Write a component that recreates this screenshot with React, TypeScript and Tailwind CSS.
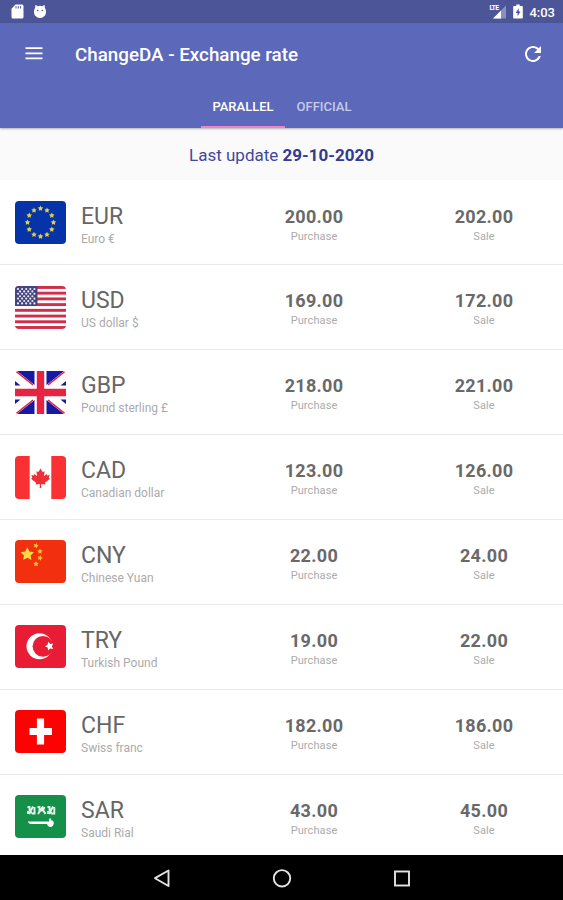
import type { ReactNode } from 'react'

const star = (cx: number, cy: number, r: number, turn = 0) =>
  Array.from({ length: 10 }, (_, i) => {
    const a = ((i * 36 - 90 + turn) * Math.PI) / 180
    const d = i % 2 ? r * 0.5 : r
    return `${(cx + d * Math.cos(a)).toFixed(2)},${(cy + d * Math.sin(a)).toFixed(2)}`
  }).join(' ')

function Flag({ children }: { children: ReactNode }) {
  return (
    <svg viewBox="0 0 51 43" className="h-[43px] w-[51px] shrink-0 rounded-[4px]">
      {children}
    </svg>
  )
}

const flags: Record<string, ReactNode> = {
  EUR: (
    <>
      <rect width="51" height="43" fill="#0534a8" />
      {Array.from({ length: 12 }, (_, i) => {
        const a = (i * Math.PI) / 6
        return (
          <polygon
            key={i}
            points={star(25.5 + 13 * Math.sin(a), 21.5 - 14 * Math.cos(a), 2.9)}
            fill="#e3cf45"
          />
        )
      })}
    </>
  ),
  USD: (
    <>
      <rect width="51" height="43" fill="#fff" />
      {Array.from({ length: 8 }, (_, i) => (
        <rect key={i} y={i * 5.72} width="51" height="2.9" fill="#d02e4b" />
      ))}
      <rect width="22.5" height="20" fill="#45457f" />
      {Array.from({ length: 7 }, (_, r) =>
        Array.from({ length: r % 2 ? 4 : 5 }, (_, c) => (
          <circle
            key={`${r}-${c}`}
            cx={3 + c * 4.1 + (r % 2 ? 2.05 : 0)}
            cy={3 + r * 2.4}
            r="1.05"
            fill="#eeeefa"
          />
        ))
      )}
    </>
  ),
  GBP: (
    <>
      <rect width="51" height="43" fill="#fff" />
      <path
        d="M2 0H19.500V14zM49 0H31.500V14zM2 43H19.500V29zM49 43H31.500V29zM0 10V14.500H5.500zM51 10V14.500H45.500zM0 33V28.500H5.500zM51 33V28.500H45.500z"
        fill="#1619a4"
      />
      <path
        d="M.5 0L18 14M50.500 0L33 14M.5 43L18 29M50.500 43L33 29"
        stroke="#df2344"
        strokeWidth="1.5"
      />
      <path d="M25.500 0V43M0 21.500H51" stroke="#e72341" strokeWidth="7.400" />
    </>
  ),
  CAD: (
    <>
      <rect width="51" height="43" fill="#fff" />
      <rect width="14.7" height="43" fill="#fb3032" />
      <rect x="36.3" width="14.7" height="43" fill="#fb3032" />
      <path
        d="M25.5 12.500l-2.100 3.500-2-.7.7 5-2.700-2.300-.6 1.400-2.400-.4.8 3-1.200.8 5 4-.4 1.600 4.300-.5-.2 4.100h1.600l-.2-4.100 4.300.5-.4-1.600 5-4-1.200-.8.8-3-2.400.4-.6-1.400-2.700 2.300.7-5-2 .7z"
        fill="#ef3137"
      />
    </>
  ),
  CNY: (
    <>
      <rect width="51" height="43" fill="#f2300f" />
      <polygon points={star(12.3, 14.3, 7)} fill="#ffda43" />
      <polygon points={star(21, 5.7, 2.9, 20)} fill="#f9bd34" />
      <polygon points={star(25, 11.5, 2.9, 0)} fill="#f9bd34" />
      <polygon points={star(25, 18, 2.9, 20)} fill="#f9bd34" />
      <polygon points={star(21, 24, 2.9, 0)} fill="#f9bd34" />
    </>
  ),
  TRY: (
    <>
      <rect width="51" height="43" fill="#e81c34" />
      <circle cx="24.5" cy="21.3" r="13" fill="#fff" />
      <circle cx="28" cy="21.3" r="10.4" fill="#e81c34" />
      <polygon points={star(34.5, 21.2, 4.6, -18)} fill="#fff" />
    </>
  ),
  CHF: (
    <>
      <rect width="51" height="43" fill="#fc0303" />
      <path d="M25.5 8.500V34.500M14.500 21.500H37" stroke="#fff" strokeWidth="7.2" />
    </>
  ),
  SAR: (
    <>
      <rect width="51" height="43" fill="#159048" />
      <path
        d="M12.500 12h2v3l2 3M18 11.500l-4 7.500M19.500 12v6.500h-3M13 16v3M22.500 12h2v3.500h3M23 19l5-7.500M29.500 12l-1.500 3 2.500 4M32.500 12h2v3l2 3.500M38 11.500l-4 7.500M39.300 12v6.500h-3M33 16v3"
        fill="none"
        stroke="#e7f5ec"
        strokeWidth="1.9"
      />
      <path
        d="M13.500 26c-.8 1.200.2 2.800 1.800 2.900H32c.5 2 2 3 3.500 3 1.800 0 3.300-1.700 3.300-4 0-1.500-1-2.500-2.500-2.700l-.8-2-1.200.3-.3 3H15c-.7 0-1.200-.1-1.500-.5z"
        fill="#fff"
      />
    </>
  ),
}

const rates = [
  { code: 'EUR', name: 'Euro €', purchase: '200.00', sale: '202.00' },
  { code: 'USD', name: 'US dollar $', purchase: '169.00', sale: '172.00' },
  { code: 'GBP', name: 'Pound sterling £', purchase: '218.00', sale: '221.00' },
  { code: 'CAD', name: 'Canadian dollar', purchase: '123.00', sale: '126.00' },
  { code: 'CNY', name: 'Chinese Yuan', purchase: '22.00', sale: '24.00' },
  { code: 'TRY', name: 'Turkish Pound', purchase: '19.00', sale: '22.00' },
  { code: 'CHF', name: 'Swiss franc', purchase: '182.00', sale: '186.00' },
  { code: 'SAR', name: 'Saudi Rial', purchase: '43.00', sale: '45.00' },
]

function StatusBar() {
  return (
    <div className="flex h-[23px] shrink-0 items-center bg-[#4b5598] pr-[8px] pl-[11px] text-white">
      <svg viewBox="0 0 13 15" className="h-[15px] w-[13px]" fill="currentColor">
        <path d="M4.500 0.500H11a1.500 1.500 0 0 1 1.500 1.500V13a1.500 1.500 0 0 1-1.500 1.500H2A1.500 1.500 0 0 1 .5 13V4.700z" />
        <path d="M5 2.200V4.500M7.300 2.200V4.500M9.600 2.200V4.500" stroke="#4b5598" strokeWidth="1" />
      </svg>
      <svg viewBox="0 0 14 15" className="ml-[9px] h-[15px] w-[14px]" fill="currentColor">
        <path d="M2.500 .8L4.500 2.300a6 6 0 0 1 5 0L11.500 .8l.5 3.500C13.400 6 13.400 10 11.500 12a6 6 0 0 1-9 0C.6 10 .6 6 2 4.300z" />
        <circle cx="4.700" cy="6.500" r=".8" fill="#4b5598" />
        <circle cx="9.300" cy="6.500" r=".8" fill="#4b5598" />
      </svg>
      <div className="relative ml-auto h-[15px] w-[18px]">
        <span className="absolute top-[1px] left-0 text-[7px] leading-[6px] font-bold tracking-[-0.800px]">LTE</span>
        <svg viewBox="0 0 18 15" className="h-[15px] w-[18px]" fill="currentColor">
          <path d="M4 14.500L17 1.500V14.500z" opacity=".35" />
          <path d="M4 14.500L12 6.500V14.500z" />
        </svg>
      </div>
      <svg viewBox="0 0 10 15" className="ml-[6px] h-[15px] w-[10px]" fill="currentColor">
        <path d="M3.300 .5h3.400v1.500H9a.8.8 0 0 1 .8.800V13.700a.8.8 0 0 1-.8.800H1a.8.8 0 0 1-.8-.8V2.800A.8.8 0 0 1 1 2h2.300z" />
        <path d="M5.700 4.300L2.600 9h2v3.300L7.500 7.500h-1.800z" fill="#4b5598" />
      </svg>
      <span className="ml-[6px] pt-[2px] text-[13px] leading-[16px] font-medium">4:03</span>
    </div>
  )
}

function Header() {
  return (
    <header className="relative z-10 h-[105px] shrink-0 bg-[#5c68b9] text-white shadow-[0_1px_2px_rgba(0,0,0,0.3)]">
      <div className="flex h-[61px] items-center pr-[21px] pl-[25px]">
        <svg viewBox="0 0 18 13" className="h-[13px] w-[18px]" stroke="currentColor" strokeWidth="1.8">
          <path d="M0.500 1.200H17.500M0.500 6.300H17.500M0.500 11.400H17.500" />
        </svg>
        <h1 className="ml-[32px] pt-[2px] text-[18.800px] leading-[24px] font-medium">
          ChangeDA - Exchange rate
        </h1>
        <svg viewBox="4 4 16 16" className="mr-[1px] ml-auto h-[16px] w-[16px]" fill="currentColor">
          <path d="M17.650 6.350C16.200 4.900 14.210 4 12 4c-4.420 0-7.990 3.580-7.990 8s3.570 8 7.990 8c3.730 0 6.840-2.550 7.730-6h-2.080c-.82 2.330-3.040 4-5.650 4-3.310 0-6-2.690-6-6s2.690-6 6-6c1.660 0 3.140.69 4.220 1.780L13 11h7V4l-2.350 2.350z" />
        </svg>
      </div>
      <nav className="flex h-[44px] text-[13px] leading-[16px] font-medium">
        <span className="ml-[201px] w-[84px] border-b-2 border-[#ee83cb] pt-[15px] text-center">PARALLEL</span>
        <span className="w-[78px] pt-[15px] text-center text-[#c5caea]">OFFICIAL</span>
      </nav>
    </header>
  )
}

function Price({ value, label, className }: { value: string; label: string; className: string }) {
  return (
    <div className={`flex flex-col items-center pt-[24px] ${className}`}>
      <span className="text-[18px] leading-[24px] font-bold tracking-[0.300px] text-[#696969]">{value}</span>
      <span className="mt-[1px] text-[11px] leading-[14px] tracking-[0.100px] text-[#ababab]">{label}</span>
    </div>
  )
}

export default function App() {
  return (
    <div className="flex h-[900px] w-[563px] flex-col overflow-hidden bg-white font-[Roboto,sans-serif]">
      <StatusBar />
      <Header />
      <p className="h-[52px] shrink-0 bg-[#fafafa] pt-[15px] text-center text-[17px] leading-[24px] text-[#3f4a9b]">
        Last update <b className="font-bold text-[#303b91]">29-10-2020</b>
      </p>
      <main className="h-[675px] shrink-0 overflow-hidden pt-[0.600px]">
        {rates.map((rate) => (
          <div key={rate.code} className="flex h-[84.850px] border-b-[1.500px] border-[#e9e9f3] pl-[15px]">
            <div className="pt-[20.500px]">
              <Flag>{flags[rate.code]}</Flag>
            </div>
            <div className="w-[142px] pt-[22px] pl-[15px] whitespace-nowrap">
              <div className="text-[23px] leading-[28px] text-[#666]">{rate.code}</div>
              <div className="text-[12px] leading-[16px] text-[#ababab]">{rate.name}</div>
            </div>
            <Price value={rate.purchase} label="Purchase" className="ml-[15px] w-[182px]" />
            <Price value={rate.sale} label="Sale" className="w-[158px]" />
          </div>
        ))}
      </main>
      <footer className="flex h-[45px] shrink-0 items-center bg-black pl-[153px]">
        <svg viewBox="0 0 258 20" className="h-[20px] w-[258px]" fill="none" stroke="#e4e4e4" strokeWidth="1.900">
          <path d="M15.500 2.500V18L2 10.200z" strokeLinejoin="round" />
          <circle cx="129" cy="10.300" r="8.200" />
          <rect x="242" y="3.500" width="14" height="14" />
        </svg>
      </footer>
    </div>
  )
}
